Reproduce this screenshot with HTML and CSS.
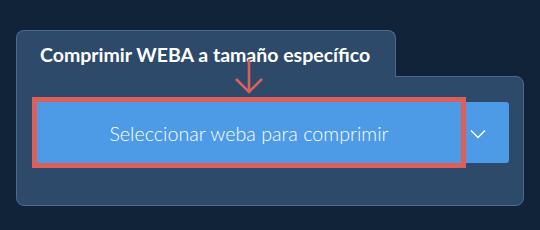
FILE: index.html
```html
<!DOCTYPE html>
<html lang="es">
<head>
    <meta charset="UTF-8">
    <meta name="viewport" content="width=device-width, initial-scale=1.0">
    <title>Comprimir WEBA</title>
    <link rel="stylesheet" href="styles.css">
</head>
<body>
    <div class="tool">
        <div class="tool-tab">Comprimir WEBA a tamaño específico</div>
        <div class="tool-panel">
            <div class="upload">
                <!-- flecha de la anotación -->
                <svg class="hint-arrow" width="30" height="37" viewBox="0 0 30 37">
                    <path d="M15 1 V34 M2 21 L15 34 L28 21" fill="none" stroke="#dd5f5a" stroke-width="2.6"/>
                </svg>
                <button class="upload-main">Seleccionar weba para comprimir</button>
                <button class="upload-more">
                    <svg width="16" height="10" viewBox="0 0 16 10">
                        <path d="M1 1.5 L8 8.5 L15 1.5" fill="none" stroke="#fff" stroke-width="1.4"/>
                    </svg>
                </button>
            </div>
        </div>
    </div>
</body>
</html>
```

FILE: styles.css
```css
body {
    margin: 0;
    background-color: #112338;
    font-family: Lato, "Open Sans", sans-serif;
    color: #fff;
}
.tool {
    padding: 30px 16px 0 16px;
    width: 508px;
}
.tool-tab {
    position: relative;
    z-index: 1;
    display: inline-block;
    box-sizing: border-box;
    width: 380px;
    height: 47px;
    margin-bottom: -1px;
    padding: 12px 0 0 23px;
    background-color: #2d4a6b;
    border: 1px solid #4b6a8c;
    border-bottom: none;
    border-radius: 8px 8px 0 0;
    font-size: 19.5px;
    font-weight: bold;
}
.tool-panel {
    box-sizing: border-box;
    height: 130px;
    padding: 25px 14px 0 20px;
    background-color: #2d4a6b;
    border: 1px solid #4b6a8c;
    border-radius: 0 8px 8px 8px;
}
.upload {
    position: relative;
    display: flex;
    height: 61px;
}
.upload button {
    border: none;
    background-color: #4d9be6;
    color: #fff;
    font-family: Lato, "Open Sans", sans-serif;
    cursor: pointer;
}
.upload-main {
    position: relative;
    z-index: 1;
    width: 424px;
    padding-top: 2px;
    font-size: 19.7px;
    font-weight: 300;
    outline: 5px solid #dd5f5a;
}
.upload-more {
    flex: 1;
    padding: 2px 14px 0 0;
    border-radius: 0 3px 3px 0;
}
.hint-arrow {
    position: absolute;
    left: 197px;
    top: -44px;
    z-index: 2;
}
```
